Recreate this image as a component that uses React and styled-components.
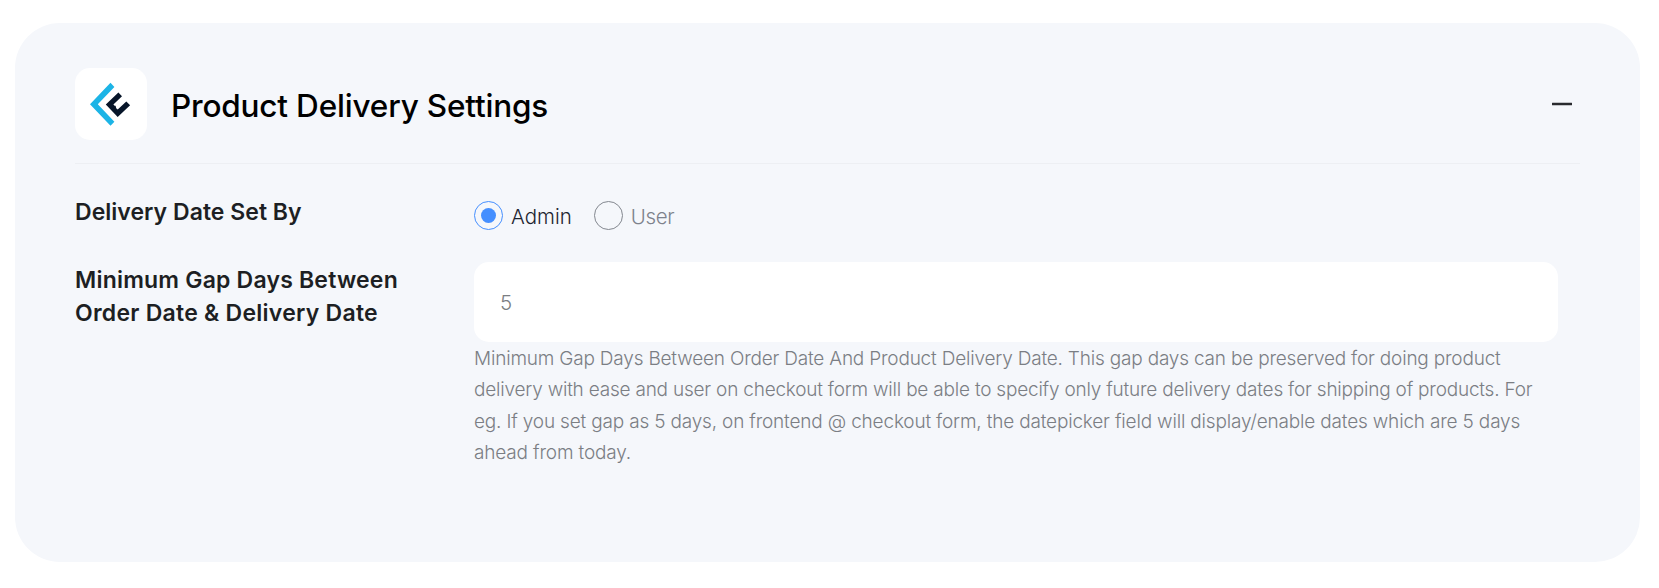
import React, { useState } from "react";
import styled, { createGlobalStyle } from "styled-components";

const GlobalStyle = createGlobalStyle`
  * {
    box-sizing: border-box;
  }

  body {
    margin: 0;
    background: #fff;
    font-family: Inter, "Liberation Sans", sans-serif;
  }
`;

const Card = styled.section`
  width: 1625px;
  height: 539px;
  margin: 23px 0 0 15px;
  padding: 45px 60px 0;
  border-radius: 45px;
  background: #f5f7fb;
`;

const CardHeader = styled.header`
  display: flex;
  align-items: center;
  height: 96px;
  padding-bottom: 23px;
  border-bottom: 1px solid #edeff3;
`;

const LogoBox = styled.div`
  display: flex;
  width: 72px;
  height: 72px;
  border-radius: 15px;
  background: #fff;
`;

const Title = styled.h2`
  flex: 1;
  margin: 4px 0 0 24px;
  color: #000;
  font-size: 31.5px;
  font-weight: 500;
  letter-spacing: -0.18px;
  line-height: 40px;
  white-space: nowrap;
`;

const ToggleButton = styled.button`
  display: flex;
  width: 20px;
  height: 20px;
  margin: 0 8px 0 0;
  padding: 0;
  border: 0;
  background: none;
  cursor: pointer;
`;

const Row = styled.div`
  display: grid;
  grid-template-columns: 399px 1084px;
  padding-top: 32px;
`;

const Label = styled.div`
  padding-top: ${(props) => props.$offset || 0}px;
  color: #1d1f23;
  font-size: 23px;
  font-weight: 600;
  line-height: 33px;
`;

const Line = styled.span`
  display: block;
  letter-spacing: ${(props) => props.$spacing || 0}px;
  white-space: nowrap;
`;

const RadioGroup = styled.div`
  display: flex;
  gap: 22px;
  height: 29px;
  margin-top: 5px;
`;

const RadioOption = styled.label`
  display: flex;
  align-items: center;
  gap: 8px;
  color: ${(props) => (props.$checked ? "#1d2430" : "#7d828c")};
  font-size: 20.5px;
  font-weight: 300;
  cursor: pointer;
`;

const RadioText = styled.span`
  padding-top: 2px;
  letter-spacing: ${(props) => props.$spacing}px;
`;

const RadioInput = styled.input`
  display: grid;
  place-content: center;
  width: 29px;
  height: 29px;
  margin: 0;
  border: 1px solid #83878f;
  border-radius: 50%;
  appearance: none;

  &:checked {
    border-color: #458fff;
  }

  &:checked::before {
    content: "";
    width: 15px;
    height: 15px;
    border-radius: 50%;
    background: #458fff;
  }
`;

const TextInput = styled.input`
  display: block;
  width: 100%;
  height: 80px;
  padding: 0 27px 0 26px;
  border: 0;
  border-radius: 15px;
  outline: none;
  background: #fff;
  color: #7b7e83;
  font-family: inherit;
  font-size: 20.5px;
  font-weight: 300;
`;

const HelpText = styled.p`
  margin: 1px 0 0;
  color: #7b7e84;
  font-size: 19px;
  font-weight: 300;
  line-height: 31.4px;
`;

const Logo = () => (
  <svg width="72" height="72" viewBox="0 0 72 72">
    <path d="M35.5 14.8 L39.4 18.9 L22.8 36.3 L39.4 53.8 L35.5 57.8 L15 36.3 Z" fill="#1cb4e6" />
    <path
      d="M43.4 24.6 L47 28.2 L38.4 36.5 L39.6 37.8 L40.6 37.8 L41.2 40.2 L42.7 41.4 L51.3 33.4 L55.1 37.2 L42.7 49 L30.8 36.6 Z"
      fill="#071529"
    />
  </svg>
);

const options = [
  { name: "Admin", spacing: 0 },
  { name: "User", spacing: -0.35 },
];

const App = () => {
  const [setBy, setSetBy] = useState("Admin");
  const [gapDays, setGapDays] = useState("5");
  const [open, setOpen] = useState(true);

  return (
    <>
      <GlobalStyle />
      <Card>
        <CardHeader>
          <LogoBox>
            <Logo />
          </LogoBox>
          <Title>Product Delivery Settings</Title>
          <ToggleButton type="button" aria-label="Toggle section" onClick={() => setOpen(!open)}>
            <svg width="20" height="20" viewBox="0 0 20 20">
              <rect y="8.7" width="20" height="2.6" rx="0.4" fill="#292a2e" />
            </svg>
          </ToggleButton>
        </CardHeader>

        {open && (
          <>
            <Row>
              <Label>
                <Line $spacing={0.03}>Delivery Date Set By</Line>
              </Label>
              <RadioGroup>
                {options.map(({ name, spacing }) => (
                  <RadioOption key={name} $checked={setBy === name}>
                    <RadioInput
                      type="radio"
                      name="setBy"
                      checked={setBy === name}
                      onChange={() => setSetBy(name)}
                    />
                    <RadioText $spacing={spacing}>{name}</RadioText>
                  </RadioOption>
                ))}
              </RadioGroup>
            </Row>

            <Row>
              <Label $offset={2}>
                <Line $spacing={0.2}>Minimum Gap Days Between</Line>
                <Line $spacing={0.25}>Order Date &amp; Delivery Date</Line>
              </Label>
              <div>
                <TextInput value={gapDays} onChange={(e) => setGapDays(e.target.value)} />
                <HelpText>
                  <Line $spacing={-0.195}>
                    Minimum Gap Days Between Order Date And Product Delivery Date. This gap days can be preserved for
                    doing product
                  </Line>
                  <Line $spacing={-0.213}>
                    delivery with ease and user on checkout form will be able to specify only future delivery dates for
                    shipping of products. For
                  </Line>
                  <Line $spacing={-0.177}>
                    eg. If you set gap as 5 days, on frontend @ checkout form, the datepicker field will display/enable
                    dates which are 5 days
                  </Line>
                  <Line $spacing={-0.16}>ahead from today.</Line>
                </HelpText>
              </div>
            </Row>
          </>
        )}
      </Card>
    </>
  );
};

export default App;
